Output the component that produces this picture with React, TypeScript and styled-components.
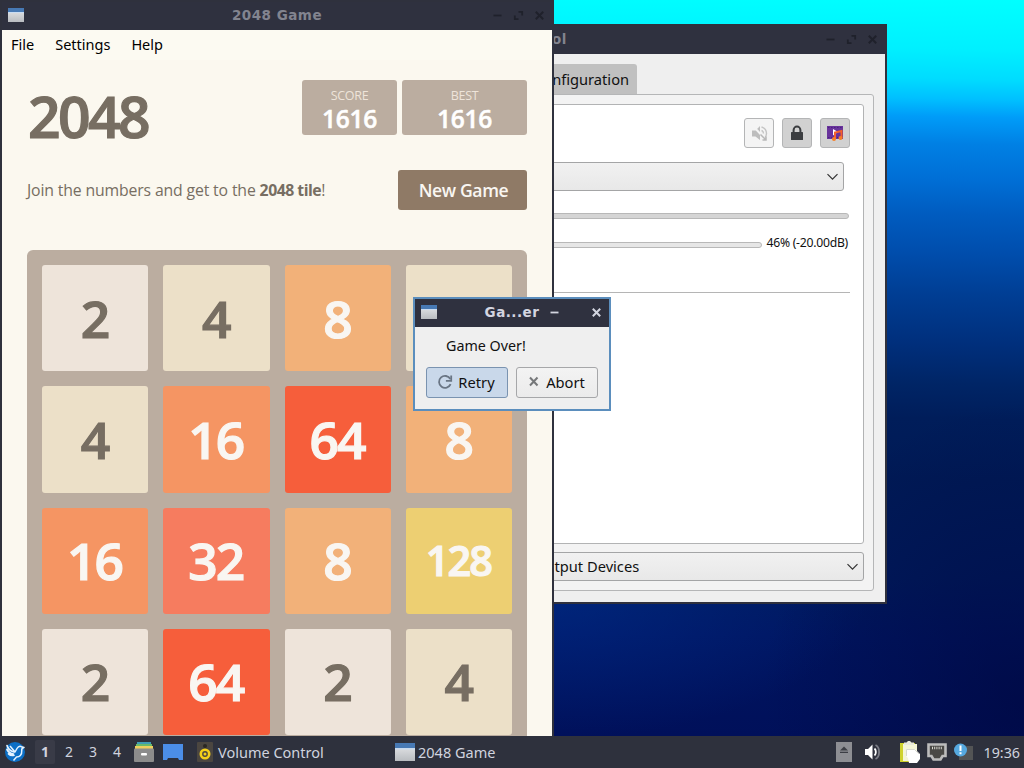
import type { ReactNode } from "react";
import styled, { createGlobalStyle } from "styled-components";

const GlobalStyle = createGlobalStyle`
  * {
    box-sizing: border-box;
  }
  body {
    margin: 0;
    overflow: hidden;
    font-family: "Noto Sans", "Open Sans", sans-serif;
    font-size: 14.67px;
    color: #111;
  }
  svg {
    display: block;
    flex-shrink: 0;
  }
`;

const Desktop = styled.div`
  position: relative;
  width: 1024px;
  height: 768px;
  overflow: hidden;
  display: flex;
  flex-direction: column;
  justify-content: flex-end;
  background: radial-gradient(
      ellipse 260px 300px at 1024px 700px,
      rgba(0, 6, 60, 0.6),
      rgba(0, 6, 60, 0)
    ),
    radial-gradient(
      ellipse 330px 150px at 540px 590px,
      rgba(0, 50, 150, 0.55),
      rgba(0, 50, 150, 0)
    ),
    linear-gradient(
      181deg,
      #00ffff 0px,
      #00f0ff 50px,
      #00dcff 80px,
      #00c0ff 100px,
      #009cf8 118px,
      #0080e4 145px,
      #006fd6 180px,
      #005cc0 215px,
      #004dac 255px,
      #003e94 295px,
      #002f7c 345px,
      #002566 385px,
      #001d5a 420px,
      #001a56 480px,
      #001a5c 580px,
      #001560 640px,
      #00105a 740px
    );
`;

const Window = styled.div<{ $x: number; $y: number; $w: number; $h: number; $border?: string }>`
  position: absolute;
  left: ${(p) => p.$x}px;
  top: ${(p) => p.$y}px;
  width: ${(p) => p.$w}px;
  height: ${(p) => p.$h}px;
  display: flex;
  flex-direction: column;
  border: 2px solid ${(p) => p.$border || "#2f313d"};
  background: #efefef;
`;

const TitleBar = styled.div<{ $active?: boolean }>`
  flex-shrink: 0;
  height: 28px;
  display: flex;
  align-items: center;
  padding: 0 7px 2px 6px;
  background: #2f313f;
  color: ${(p) => (p.$active ? "#d3d5e0" : "#82848f")};
`;

const Title = styled.div<{ $shift?: number }>`
  flex: 1;
  text-align: center;
  font-family: "DejaVu Sans", sans-serif;
  font-weight: bold;
  font-size: 13.5px;
  letter-spacing: 0.5px;
  padding-left: ${(p) => p.$shift || 0}px;
  white-space: nowrap;
`;

const Controls = styled.div<{ $gap: number }>`
  display: flex;
  gap: ${(p) => p.$gap}px;
`;

const MenuBar = styled.div`
  height: 30px;
  display: flex;
  align-items: center;
  gap: 21px;
  padding: 0 0 2px 9px;
  background: #fcfaf2;
  color: #000;
  font-size: 14.5px;
`;

const GameBody = styled.div`
  flex: 1;
  display: flex;
  flex-direction: column;
  padding: 20px 25px 0;
  background: #fbf8ef;
  font-family: "Open Sans", "Noto Sans", sans-serif;
  color: #776e62;
  overflow: hidden;
`;

const GameHeader = styled.div`
  flex-shrink: 0;
  height: 90px;
  display: flex;
  justify-content: space-between;
`;

const Heading = styled.h1`
  margin: -4px 0 0 1px;
  font-size: 57px;
  line-height: 80px;
  font-weight: 600;
  letter-spacing: -2.6px;
  -webkit-text-stroke: 1.2px currentColor;
`;

const Scores = styled.div`
  display: flex;
  gap: 5px;
`;

const ScoreBox = styled.div<{ $w: number }>`
  width: ${(p) => p.$w}px;
  height: 55px;
  padding-top: 7px;
  display: flex;
  flex-direction: column;
  align-items: center;
  border-radius: 3px;
  background: #bbada0;
  color: #fff;
  font-size: 24.6px;
  font-weight: 600;
  line-height: 30px;
  letter-spacing: -0.3px;
  -webkit-text-stroke: 0.5px #fff;
`;

const ScoreLabel = styled.span`
  color: #eee4da;
  font-size: 12.5px;
  font-weight: 400;
  line-height: 17px;
  letter-spacing: -0.3px;
  -webkit-text-stroke: 0;
`;

const Intro = styled.div`
  flex-shrink: 0;
  height: 80px;
  display: flex;
  align-items: flex-start;
  justify-content: space-between;
  font-size: 15.8px;
  line-height: 40px;
  letter-spacing: -0.15px;

  b {
    letter-spacing: -0.5px;
  }
`;

const NewGame = styled.div`
  width: 129px;
  height: 40px;
  padding-left: 2px;
  border-radius: 3px;
  background: #8f7a66;
  color: #f9f6f2;
  text-align: center;
  font-size: 17.6px;
  font-weight: 600;
  letter-spacing: -0.4px;
`;

const Board = styled.div`
  flex-shrink: 0;
  width: 500px;
  height: 500px;
  display: grid;
  grid-template-columns: repeat(4, 106.25px);
  grid-auto-rows: 106.25px;
  gap: 15px;
  padding: 15px;
  border-radius: 6px;
  background: #bbada0;
`;

const tileColors: Record<number, string> = {
  2: "#eee4da",
  4: "#ece0c8",
  8: "#f2b179",
  16: "#f59563",
  32: "#f67c5f",
  64: "#f65e3b",
  128: "#edcf72",
};

const Tile = styled.div<{ $value: number }>`
  display: flex;
  align-items: center;
  justify-content: center;
  padding: 0 1px 1px 0;
  border-radius: 3px;
  background: ${(p) => tileColors[p.$value]};
  color: ${(p) => (p.$value > 4 ? "#f9f6f2" : "#776e62")};
  font-size: ${(p) => (p.$value > 99 ? 41.5 : 51.5)}px;
  font-weight: 600;
  letter-spacing: ${(p) => (p.$value > 99 ? -1.9 : -1.8)}px;
  -webkit-text-stroke: 1.2px currentColor;
`;

const MixerBody = styled.div`
  flex: 1;
  display: flex;
  flex-direction: column;
  padding: 10px 11px 11px;
`;

const Tab = styled.div`
  align-self: flex-start;
  height: 30px;
  margin-left: 378px;
  padding: 0 8px;
  line-height: 30px;
  border-radius: 3px 3px 0 0;
  background: #c0c0c0;
  color: #111;
`;

const TabPane = styled.div`
  flex: 1;
  display: flex;
  flex-direction: column;
  gap: 8px;
  padding: 9px;
  border: 1px solid #b5b6b7;
  border-radius: 3px;
  background: #f3f3f3;
`;

const DeviceList = styled.div`
  flex: 1;
  padding: 13px 13px 0;
  border: 1px solid #b2b3b4;
  border-radius: 3px;
  background: #fff;
`;

const ButtonRow = styled.div`
  display: flex;
  justify-content: flex-end;
  gap: 8px;
`;

const ToolButton = styled.div<{ $on?: boolean }>`
  width: 30px;
  height: 30px;
  display: flex;
  align-items: center;
  justify-content: center;
  border: 1px solid #b4b5b6;
  border-radius: 3px;
  background: ${(p) => (p.$on ? "#d1d1d1" : "#f4f4f4")};
`;

const Combo = styled.div`
  height: 29px;
  display: flex;
  align-items: center;
  justify-content: space-between;
  padding: 0 4px 0;
  border: 1px solid #a4a5a6;
  border-radius: 3px;
  background: linear-gradient(#f1f1f1, #e8e8e8);
`;

const PortCombo = styled(Combo)`
  margin: 14px 6px 22px 0;
`;

const Meter = styled.div`
  height: 6px;
  margin-right: 1px;
  border: 1px solid #b8b8b8;
  border-radius: 3px;
  background: #d5d5d5;
`;

const VolumeRow = styled.div`
  display: flex;
  align-items: center;
  height: 16px;
  margin: 15px 2px 42px 0;
  gap: 4px;
  font-size: 12.2px;
  letter-spacing: -0.25px;
  white-space: nowrap;
`;

const Slider = styled.div`
  flex: 1;
  height: 6px;
  margin-top: 6px;
  border: 1px solid #b8b8b8;
  border-radius: 3px;
  background: #e6e6e6;
`;

const Separator = styled.div`
  height: 1px;
  background: #b5b5b5;
`;

const ShowLabel = styled.span`
  padding-left: 371px;
  line-height: 26px;
  padding-bottom: 1px;
`;

const DialogBody = styled.div`
  flex: 1;
  padding: 8px 11px 11px;
  display: flex;
  flex-direction: column;
  justify-content: space-between;
`;

const Message = styled.div`
  padding-left: 20px;
  line-height: 21px;
  font-size: 14.3px;
`;

const DialogButtons = styled.div`
  display: flex;
  gap: 8px;
`;

const DialogButton = styled.div<{ $focus?: boolean }>`
  width: 82px;
  height: 31px;
  display: flex;
  align-items: center;
  justify-content: center;
  gap: 5px;
  padding: 0 2px 1px 0;
  border: 1px solid ${(p) => (p.$focus ? "#7a93b0" : "#a6a7a9")};
  border-radius: 3px;
  background: ${(p) => (p.$focus ? "#c9d8ea" : "linear-gradient(#f3f3f3, #ebebeb)")};
  font-size: 14.7px;
`;

const Panel = styled.div`
  position: relative;
  height: 32px;
  display: flex;
  align-items: center;
  padding: 0 4px;
  background: #2e313d;
  color: #d0d3df;
`;

const Workspace = styled.div<{ $active?: boolean }>`
  width: ${(p) => (p.$active ? 20 : 24)}px;
  height: 24px;
  margin-right: ${(p) => (p.$active ? 2 : 0)}px;
  line-height: 24px;
  text-align: center;
  border-radius: 2px;
  background: ${(p) => (p.$active ? "#393b47" : "transparent")};
  font-weight: ${(p) => (p.$active ? 700 : 400)};
  font-size: 14px;
`;

const Pager = styled.div`
  display: flex;
  margin: 0 5px 0 9px;
`;

const Launchers = styled.div`
  display: flex;
  align-items: center;
  gap: 9px;
`;

const Task = styled.div<{ $w: number; $gap: number }>`
  width: ${(p) => p.$w}px;
  display: flex;
  align-items: center;
  gap: ${(p) => p.$gap}px;
  font-size: 14.5px;
  white-space: nowrap;
`;

const Tasks = styled.div`
  flex: 1;
  display: flex;
  padding-left: 14px;
`;

const Tray = styled.div`
  display: flex;
  align-items: center;
  gap: 7px;
`;

const Clock = styled.span`
  margin-left: 3px;
  font-size: 14.3px;
`;

const AppIcon = ({ w = 16, h = 14 }: { w?: number; h?: number }) => (
  <svg width={w} height={h} viewBox="0 0 16 14" preserveAspectRatio="none">
    <defs>
      <linearGradient id="app" x1="0" y1="0" x2="0" y2="1">
        <stop offset="0" stopColor="#e8eaec" />
        <stop offset="1" stopColor="#b9bcc0" />
      </linearGradient>
    </defs>
    <rect width="16" height="14" fill="url(#app)" />
    <rect width="16" height="4" fill="#4779b4" />
    <rect y="4" width="16" height="1" fill="#c9dcf2" />
  </svg>
);

const Minimize = () => (
  <svg width="11" height="11" viewBox="0 0 11 11">
    <path d="M1.5 5.5h8" stroke="currentColor" strokeWidth="1.8" />
  </svg>
);

const Maximize = () => (
  <svg width="11" height="11" viewBox="0 0 11 11">
    <path d="M5.5 1.8h3.7v3.7M1.8 5.5v3.7h3.7" fill="none" stroke="currentColor" strokeWidth="1.8" />
  </svg>
);

const Close = () => (
  <svg width="11" height="11" viewBox="0 0 11 11">
    <path d="M1.8 1.8l7.4 7.4M9.2 1.8L1.8 9.2" stroke="currentColor" strokeWidth="2" />
  </svg>
);

const DimControls = styled(Controls)`
  color: #1f212b;
`;

const Chevron = () => (
  <svg width="13" height="10" viewBox="0 0 13 10">
    <path d="M1.5 2.2l5 5 5-5" fill="none" stroke="#333" strokeWidth="1.2" />
  </svg>
);

const MutedIcon = () => (
  <svg width="17" height="17" viewBox="0 0 17 17">
    <path d="M1 5.5h3.5L9 1v14L4.5 11.5H1z" fill="#bdbdbd" />
    <path
      d="M10.5 2c3 .8 5 3.4 5 6.5 0 2-.8 3.5-2 4.7M10.5 5.5c1.5.5 2 1.7 2 3"
      fill="none"
      stroke="#c4c4c4"
      strokeWidth="1.4"
    />
    <path d="M2 1l14 15" stroke="#f4f4f4" strokeWidth="2" />
    <path d="M9.5 9.5l5.5 5.5M15 11.5V15h-3.5" fill="none" stroke="#b8b8b8" strokeWidth="1.5" />
  </svg>
);

const LockIcon = () => (
  <svg width="14" height="16" viewBox="0 0 14 16">
    <path d="M3.6 8V5a3.4 3.4 0 0 1 6.8 0v3" fill="none" stroke="#3b3d40" strokeWidth="2" />
    <rect x="1" y="7" width="12" height="8" rx=".5" fill="#3b3d40" />
  </svg>
);

const MediaIcon = () => (
  <svg width="18" height="17" viewBox="0 0 18 17">
    <rect x="1" y="1" width="16" height="13" fill="#69339b" />
    <path d="M2 2.5h14M2 12.5h14" stroke="#4b2180" strokeWidth="1" strokeDasharray="1.5 1.5" />
    <path d="M7 4l5 3-5 3.5z" fill="#fff" />
    <path d="M9 14V7.5L15.5 6v7.5" fill="none" stroke="#f4602c" strokeWidth="2" />
    <circle cx="8" cy="14" r="2" fill="#f77f27" />
    <circle cx="14.5" cy="13" r="2" fill="#f77f27" />
  </svg>
);

const RetryIcon = () => (
  <svg width="16" height="16" viewBox="0 0 16 16">
    <path d="M13.6 10.2A6 6 0 1 1 13.3 5" fill="none" stroke="#697584" strokeWidth="1.8" />
    <path d="M14.2 1.5v5.3H8.9" fill="none" stroke="#697584" strokeWidth="1.8" />
  </svg>
);

const AbortIcon = () => (
  <svg width="14" height="14" viewBox="0 0 14 14">
    <path d="M3 2.5l7.5 8M10.5 2.5l-7.5 8" stroke="#76787a" strokeWidth="2" />
  </svg>
);

const StartIcon = () => (
  <svg width="22" height="22" viewBox="0 0 22 22">
    <circle cx="11" cy="11" r="10" fill="#0b6fc6" />
    <path
      d="M3 4.5c1 3.5 3.5 5.5 7 6.5M3 8.5c1.5 3 3.5 4.2 6.5 4.5M4.5 12.8c1.5 1.5 3.5 2 5.5 1.5"
      fill="none"
      stroke="#e4f3ff"
      strokeWidth="1.7"
      strokeLinecap="round"
    />
    <path
      d="M6 5l5 6 2-3.5c1.2-2 3-2.500 4.500-1.800L20 6.500c-2 .3-2.500 1.500-2.300 3.500.4 4-2.200 6-5.200 6L9.500 19.500"
      fill="none"
      stroke="#e4f3ff"
      strokeWidth="1.5"
      strokeLinejoin="round"
    />
  </svg>
);

const DrawerIcon = () => (
  <svg width="20" height="20" viewBox="0 0 20 20">
    <rect x="3" width="14" height="3" fill="#3f9db4" />
    <rect x="2" y="2" width="16" height="3" fill="#69b96a" />
    <rect x="1" y="4" width="18" height="4" fill="#efcf5d" />
    <rect y="6.5" width="20" height="13.5" rx="1" fill="#8c8c8c" />
    <rect x="7" y="11" width="6" height="2.5" rx="1" fill="#fff" />
  </svg>
);

const DesktopIcon = () => (
  <svg width="20" height="18" viewBox="0 0 20 18">
    <path d="M0 1h20v16h-4l-1-2H5l-1 2H0z" fill="#4b8ee8" />
  </svg>
);

const SpeakerBoxIcon = () => (
  <svg width="16" height="20" viewBox="0 0 16 20">
    <rect width="16" height="20" rx="1" fill="#4b4640" />
    <circle cx="8" cy="4" r="2" fill="#2a2723" />
    <circle cx="8" cy="12" r="4.2" fill="none" stroke="#f3cf19" strokeWidth="2.6" />
    <circle cx="8" cy="12" r="1.5" fill="#f3cf19" />
  </svg>
);

const EjectIcon = () => (
  <svg width="16" height="20" viewBox="0 0 16 20">
    <rect width="16" height="20" fill="#8d8e93" />
    <path d="M8 4.5l4 4H4zM4 9.7h8V11H4z" fill="#3c3e45" />
  </svg>
);

const SoundIcon = () => (
  <svg width="18" height="18" viewBox="0 0 18 18">
    <path d="M1 6h3l4.5-4.5v15L4 12H1z" fill="#fff" />
    <path d="M10.5 5.5c1.8 1.5 1.8 5.5 0 7" fill="none" stroke="#fff" strokeWidth="1.8" />
    <path d="M11.5 2c4.8 2.3 4.8 11.5 0 14" fill="none" stroke="#7b7d86" strokeWidth="1.8" />
  </svg>
);

const ClipboardIcon = () => (
  <svg width="20" height="22" viewBox="0 0 20 22">
    <rect y="2" width="15" height="19" fill="#cfd22e" />
    <rect x="3" y="3" width="14" height="17" fill="#f4f5d8" />
    <path d="M4 4V1.5h2.5L8 0h2l1.5 1.5H14V4z" fill="#e9e9dc" />
    <path d="M6 8h9l5 5v5l-3 4H9l-1-5-2-2z" fill="#fff" />
    <path d="M6.500 15V8.500h8l4.500 4.500" fill="none" stroke="#cfd0c4" strokeWidth=".8" />
  </svg>
);

const NetworkIcon = () => (
  <svg width="20" height="18" viewBox="0 0 20 18">
    <path
      d="M1.5 1.5h17V13h-3l-2 3.5h-7L4.5 13h-3z"
      fill="#4a4946"
      stroke="#bcbcbc"
      strokeWidth="2.6"
    />
    <path d="M5 5h10" stroke="#d8d8d0" strokeWidth="2.5" strokeDasharray="1 1.2" />
  </svg>
);

const UpdateIcon = () => (
  <svg width="19" height="18" viewBox="0 0 19 18">
    <rect x="5" y="3" width="14" height="14" fill="#535455" />
    <circle cx="6.5" cy="7" r="6.5" fill="#55a8df" />
    <path d="M6.5 2.5V8M6.5 9.3v1.9" stroke="#fff" strokeWidth="2" />
  </svg>
);

const SoundSlot = styled.div`
  margin: 0 11px 0 5px;
`;

function WindowTitle({ children, shift }: { children: ReactNode; shift?: number }) {
  return (
    <TitleBar>
      <AppIcon />
      <Title $shift={shift}>{children}</Title>
      <DimControls $gap={10}>
        <Minimize />
        <Maximize />
        <Close />
      </DimControls>
    </TitleBar>
  );
}

const tiles = [2, 4, 8, 4, 4, 16, 64, 8, 16, 32, 8, 128, 2, 64, 2, 4];

// this tile's number sits behind the dialog
const coveredTile = 3;

function App() {
  return (
    <Desktop>
      <GlobalStyle />
      <Window $x={135} $y={24} $w={752} $h={580}>
        <WindowTitle shift={26}>Volume Control</WindowTitle>
        <MixerBody>
          <Tab>Configuration</Tab>
          <TabPane>
            <DeviceList>
              <ButtonRow>
                <ToolButton>
                  <MutedIcon />
                </ToolButton>
                <ToolButton $on>
                  <LockIcon />
                </ToolButton>
                <ToolButton $on>
                  <MediaIcon />
                </ToolButton>
              </ButtonRow>
              <PortCombo>
                <span />
                <Chevron />
              </PortCombo>
              <Meter />
              <VolumeRow>
                <Slider />
                <span>46% (-20.00dB)</span>
              </VolumeRow>
              <Separator />
            </DeviceList>
            <Combo>
              <ShowLabel>Output Devices</ShowLabel>
              <Chevron />
            </Combo>
          </TabPane>
        </MixerBody>
      </Window>
      <Window $x={0} $y={0} $w={554} $h={740}>
        <WindowTitle shift={38}>2048 Game</WindowTitle>
        <MenuBar>
          <span>File</span>
          <span>Settings</span>
          <span>Help</span>
        </MenuBar>
        <GameBody>
          <GameHeader>
            <Heading>2048</Heading>
            <Scores>
              <ScoreBox $w={95}>
                <ScoreLabel>SCORE</ScoreLabel>
                1616
              </ScoreBox>
              <ScoreBox $w={125}>
                <ScoreLabel>BEST</ScoreLabel>
                1616
              </ScoreBox>
            </Scores>
          </GameHeader>
          <Intro>
            <span>
              Join the numbers and get to the <b>2048 tile</b>!
            </span>
            <NewGame>New Game</NewGame>
          </Intro>
          <Board>
            {tiles.map((value, i) => (
              <Tile key={i} $value={value}>
                {i !== coveredTile && value}
              </Tile>
            ))}
          </Board>
        </GameBody>
      </Window>
      <Window $x={413} $y={297} $w={198} $h={114} $border="#5b8ebd">
        <TitleBar $active>
          <AppIcon />
          <Title $shift={38}>Ga...er</Title>
          <Controls $gap={31}>
            <Minimize />
            <Close />
          </Controls>
        </TitleBar>
        <DialogBody>
          <Message>Game Over!</Message>
          <DialogButtons>
            <DialogButton $focus>
              <RetryIcon />
              Retry
            </DialogButton>
            <DialogButton>
              <AbortIcon />
              Abort
            </DialogButton>
          </DialogButtons>
        </DialogBody>
      </Window>
      <Panel>
        <StartIcon />
        <Pager>
          <Workspace $active>1</Workspace>
          <Workspace>2</Workspace>
          <Workspace>3</Workspace>
          <Workspace>4</Workspace>
        </Pager>
        <Launchers>
          <DrawerIcon />
          <DesktopIcon />
        </Launchers>
        <Tasks>
          <Task $w={198} $gap={5}>
            <SpeakerBoxIcon />
            Volume Control
          </Task>
          <Task $w={198} $gap={3}>
            <AppIcon w={20} h={18} />
            2048 Game
          </Task>
        </Tasks>
        <Tray>
          <EjectIcon />
          <SoundSlot>
            <SoundIcon />
          </SoundSlot>
          <ClipboardIcon />
          <NetworkIcon />
          <UpdateIcon />
          <Clock>19:36</Clock>
        </Tray>
      </Panel>
    </Desktop>
  );
}

export default App;
